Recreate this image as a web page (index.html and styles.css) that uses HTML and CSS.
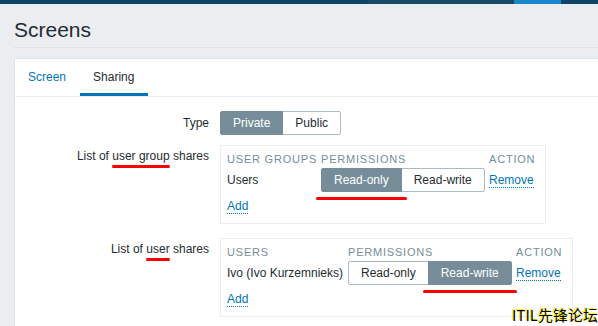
FILE: index.html
```html
<!DOCTYPE html>
<html lang="en">
<head>
    <meta charset="UTF-8">
    <meta name="viewport" content="width=device-width, initial-scale=1.0">
    <title>Screens</title>
    <link rel="stylesheet" href="styles.css">
</head>
<body>
    <div class="topbar">
        <span class="bar-a"></span>
        <span class="bar-b"></span>
        <span class="bar-c"></span>
        <span class="bar-d"></span>
    </div>

    <header class="page-header">
        <h1>Screens</h1>
    </header>

    <div class="panel">
        <ul class="tabs">
            <li><a href="#">Screen</a></li>
            <li class="active"><a href="#">Sharing</a></li>
        </ul>

        <div class="form">
            <div class="form-row row-type">
                <div class="form-label">Type</div>
                <div class="form-field">
                    <div class="segmented">
                        <span class="seg on">Private</span>
                        <span class="seg">Public</span>
                    </div>
                </div>
            </div>

            <div class="form-row row-groups">
                <div class="form-label">List of <span class="mark">user group</span> shares</div>
                <div class="form-field">
                    <div class="share-box groups">
                        <div class="th">User groups</div>
                        <div class="th">Permissions</div>
                        <div class="th">Action</div>

                        <div class="td">Users</div>
                        <div class="td">
                            <div class="segmented">
                                <span class="seg on marked">Read-only</span>
                                <span class="seg">Read-write</span>
                            </div>
                        </div>
                        <div class="td"><a class="link" href="#">Remove</a></div>

                        <div class="td add"><a class="link" href="#">Add</a></div>
                    </div>
                </div>
            </div>

            <div class="form-row">
                <div class="form-label">List of <span class="mark">user</span> shares</div>
                <div class="form-field">
                    <div class="share-box users">
                        <div class="th">Users</div>
                        <div class="th">Permissions</div>
                        <div class="th">Action</div>

                        <div class="td">Ivo (Ivo Kurzemnieks)</div>
                        <div class="td">
                            <div class="segmented">
                                <span class="seg">Read-only</span>
                                <span class="seg on marked">Read-write</span>
                            </div>
                        </div>
                        <div class="td"><a class="link" href="#">Remove</a></div>

                        <div class="td add"><a class="link" href="#">Add</a></div>
                    </div>
                </div>
            </div>
        </div>
    </div>

    <div class="watermark">ITIL先锋论坛</div>
</body>
</html>
```

FILE: styles.css
```css
body {
    margin: 0;
    font-family: Arial, "Liberation Sans", sans-serif;
    font-size: 12px;
    color: #1f2c33;
    background: #ebeef1;
    height: 326px;
    overflow: hidden;
    position: relative;
}

a {
    text-decoration: none;
}

/* top navigation strip */
.topbar {
    display: flex;
    height: 4px;
    background: #0e4566;
}

.bar-a {
    width: 368px;
}

.bar-b {
    width: 146px;
    background: #184a66;
}

.bar-c {
    width: 47px;
    background: #1b86c8;
}

.bar-d {
    flex: 1;
}

.page-header {
    margin-left: 14px;
    padding: 14px 0 5px;
    border-bottom: 1px solid #dde3e7;
}

h1 {
    margin: 0;
    font-size: 21px;
    font-weight: normal;
    line-height: 24px;
    color: #1f2c33;
}

.panel {
    margin: 10px 0 0 14px;
    background: #fff;
    border-top: 1px solid #dfe4e7;
    border-left: 1px solid #dfe4e7;
    height: 267px;
}

/* tabs */
.tabs {
    display: flex;
    margin: 0;
    padding: 0;
    list-style: none;
    height: 37px;
    border-bottom: 1px solid #ebeef1;
}

.tabs li {
    box-sizing: border-box;
    height: 37px;
}

.tabs a {
    display: block;
    padding: 0 14px 0 13px;
    line-height: 37px;
    color: #0275b8;
}

.tabs .active {
    border-bottom: 3px solid #0275b8;
}

.tabs .active a {
    padding: 0 14px 0 13px;
    color: #1f2c33;
    line-height: 36px;
}

/* form */
.form {
    padding-top: 14px;
}

.form-row {
    display: grid;
    grid-template-columns: 194px auto;
    column-gap: 11px;
    align-items: start;
    margin-bottom: 14px;
}

.row-type {
    align-items: center;
    margin-bottom: 10px;
}

.form-label {
    text-align: right;
    line-height: 14px;
    padding-top: 4px;
}

.row-type .form-label {
    padding-top: 0;
}

.form-field {
    justify-self: start;
}

.mark {
    text-decoration: underline;
    text-decoration-color: #f00;
    text-decoration-thickness: 3px;
    text-underline-offset: 5px;
}

/* segmented radio buttons */
.segmented {
    display: inline-flex;
}

.seg {
    position: relative;
    box-sizing: border-box;
    height: 24px;
    padding: 0 12px;
    line-height: 22px;
    border: 1px solid #acbbc2;
    background: #fff;
    color: #1f2c33;
    white-space: nowrap;
}

.seg + .seg {
    margin-left: -1px;
}

.seg:first-child {
    border-radius: 2px 0 0 2px;
}

.seg:last-child {
    border-radius: 0 2px 2px 0;
}

.seg.on {
    background: #768d99;
    border-color: #768d99;
    color: #fff;
    z-index: 1;
}

.marked::after {
    content: "";
    position: absolute;
    left: -6px;
    right: -6px;
    top: calc(100% + 6px);
    height: 3px;
    border-radius: 2px;
    background: #f00;
}

/* share tables */
.share-box {
    display: grid;
    align-items: center;
    padding: 6px 10px 10px 6px;
    border: 1px solid #ebeef1;
    line-height: 14px;
}

.groups {
    grid-template-columns: 94px 168px auto;
}

.users {
    grid-template-columns: 121px 168px auto;
}

.th {
    font-size: 11px;
    letter-spacing: 0.8px;
    text-transform: uppercase;
    color: #768d99;
    white-space: nowrap;
}

.th + .th + .th + .td,
.th + .th + .th + .td + .td,
.th + .th + .th + .td + .td + .td {
    margin-top: 2px;
}

.td {
    white-space: nowrap;
}

.td.add {
    grid-column: 1 / -1;
    margin-top: 7px;
}

.link {
    color: #0275b8;
    border-bottom: 1px dotted #0275b8;
}

.watermark {
    position: absolute;
    right: 0;
    bottom: 2px;
    font-family: "Noto Sans CJK SC", sans-serif;
    font-size: 15px;
    line-height: 18px;
    color: #000;
    text-shadow: -1px -1px 0 #ffef00;
}
```
